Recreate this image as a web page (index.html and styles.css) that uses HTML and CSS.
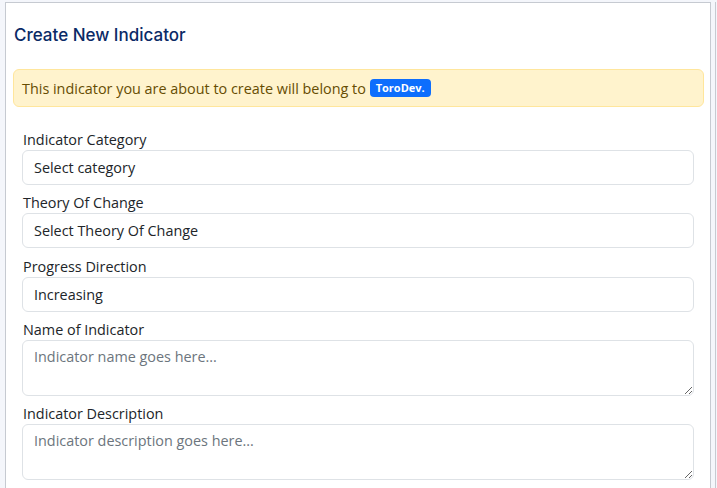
FILE: index.html
```html
<!DOCTYPE html>
<html>
<head>
<meta charset="utf-8">
<link rel="stylesheet" href="styles.css">
</head>
<body>
<div class="page">
  <div class="card">
    <h2 class="title">Create New Indicator</h2>
    <div class="alert">This indicator you are about to create will belong to <span class="badge">ToroDev.</span></div>
    <form class="form">
      <div class="field">
        <label class="label">Indicator Category</label>
        <div class="control">Select category</div>
      </div>
      <div class="field">
        <label class="label">Theory Of Change</label>
        <div class="control">Select Theory Of Change</div>
      </div>
      <div class="field">
        <label class="label">Progress Direction</label>
        <div class="control">Increasing</div>
      </div>
      <div class="field">
        <label class="label">Name of Indicator</label>
        <textarea class="control area" placeholder="Indicator name goes here..."></textarea>
      </div>
      <div class="field">
        <label class="label">Indicator Description</label>
        <textarea class="control area" placeholder="Indicator description goes here..."></textarea>
      </div>
    </form>
  </div>
  <div class="side"></div>
</div>
</body>
</html>
```
FILE: styles.css
```css
html, body {
  margin: 0;
  padding: 0;
  background: #f4f6fb;
  height: 100%;
  overflow: hidden;
}
.page {
  display: flex;
  padding: 2px 0 0 5px;
  gap: 4px;
  height: 100%;
  box-sizing: border-box;
}
.card {
  width: 706px;
  flex: none;
  box-sizing: border-box;
  background: #fff;
  border: 1px solid #c6cad1;
  border-bottom: none;
  padding: 0 6px 0 7px;
  font-family: "Open Sans", sans-serif;
}
.side {
  width: 2px;
  border-left: 1px solid #c6cad1;
  flex: none;
}
.title {
  margin: 20px 0 0 1px;
  font-family: Inter, sans-serif;
  font-weight: 500;
  font-size: 17px;
  line-height: 24px;
  color: #0a2a66;
}
.alert {
  margin-top: 22px;
  height: 38px;
  box-sizing: border-box;
  background: #fff3cd;
  border: 1px solid #ffe69c;
  border-radius: 6px;
  color: #664d03;
  font-size: 14.4px;
  display: flex;
  align-items: center;
  padding: 0 8px;
  white-space: pre;
}
.badge {
  display: inline-block;
  background: #0d6efd;
  color: #fff;
  font-weight: 700;
  font-size: 11px;
  line-height: 18px;
  padding: 0 6px;
  border-radius: 4px;
}
.form {
  padding: 22px 10px 0 9px;
}
.field {
  display: flex;
  flex-direction: column;
}
.field + .field {
  margin-top: 7.3px;
}
.label {
  font-size: 14.4px;
  line-height: 21px;
  color: #212529;
  padding-left: 1px;
}
.control {
  height: 35px;
  box-sizing: border-box;
  border: 1px solid #dee2e6;
  border-radius: 6px;
  padding: 0 11px;
  display: flex;
  align-items: center;
  font-size: 14.4px;
  color: #212529;
  background: #fff;
}
.area {
  height: 56px;
  display: block;
  width: 100%;
  font-family: "Open Sans", sans-serif;
  padding: 6px 11px;
  resize: vertical;
  margin: 0;
}
.area::placeholder {
  color: #6c757d;
}
```
